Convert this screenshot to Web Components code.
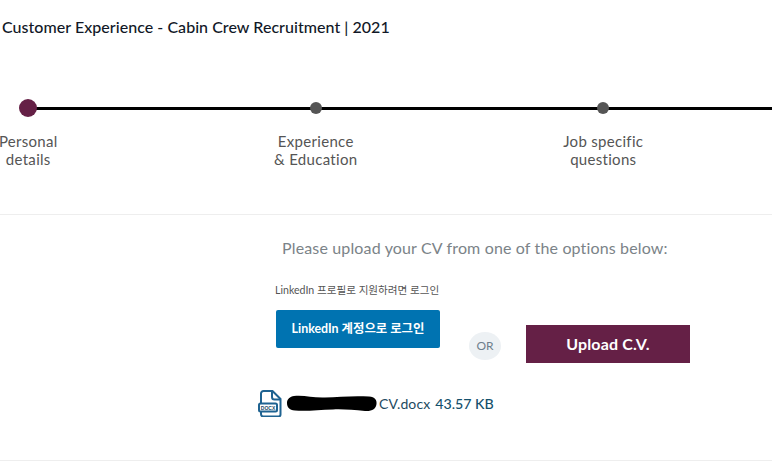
<!DOCTYPE html>
<html>
<head>
<meta charset="utf-8">
<style>
    html, body { margin: 0; background: #fff; overflow: hidden; }
    body { font-family: Lato, "Noto Sans CJK KR", sans-serif; height: 473px; width: 772px; }
</style>
</head>
<body>
<recruit-page></recruit-page>
<script>
const FONT = 'Lato, "Noto Sans CJK KR", sans-serif'

class FormStepper extends HTMLElement {
    constructor() {
        super()
        const shadow = this.attachShadow({ mode: 'open' })
        shadow.innerHTML = `
            <style>
                :host { display: block; position: relative; height: 119px; font-family: ${FONT}; }
                .line { position: absolute; left: 28px; right: 0; top: 12px; height: 3px; background: #000; }
                ol { list-style: none; margin: 0; padding: 0; display: grid; grid-template-columns: repeat(3, 287.5px); margin-left: -115.5px; position: relative; }
                li { display: flex; flex-direction: column; align-items: center; }
                i { display: block; width: 12px; height: 12px; border-radius: 50%; background: #555; margin: 7px 0 18px; }
                li.on i { width: 18px; height: 18px; background: #652046; margin: 4px 0 15px; }
                span { font-size: 15px; line-height: 18px; color: #555; text-align: center; letter-spacing: .3px; }
            </style>
            <div class="line"></div>
            <ol>
                <li class="on"><i></i><span>Personal<br>details</span></li>
                <li><i></i><span>Experience<br>&amp; Education</span></li>
                <li><i></i><span>Job specific<br>questions</span></li>
            </ol>`
    }
}

class OrBadge extends HTMLElement {
    constructor() {
        super()
        this.attachShadow({ mode: 'open' }).innerHTML = `
            <style>
                :host { display: flex; align-items: center; justify-content: center; width: 32px; height: 28px; border-radius: 50%; background: #edf1f4; color: #6f7f8c; font: 12px ${FONT}; padding-bottom: 1px; box-sizing: border-box; }
            </style>
            <slot></slot>`
    }
}

class FileChip extends HTMLElement {
    constructor() {
        super()
        this.attachShadow({ mode: 'open' }).innerHTML = `
            <style>
                :host { display: flex; align-items: center; font-family: ${FONT}; }
                svg { display: block; }
                .doc { margin-right: 5px; }
                .mask { margin-right: 2px; }
                .name { font-size: 14px; color: #1d4a5f; letter-spacing: .1px; }
                .size { font-size: 14.2px; font-weight: 500; color: #14506c; margin-left: 5px; }
            </style>
            <svg class="doc" width="24" height="27" viewBox="0 0 24 27" fill="none" stroke="#1f6391" stroke-width="2">
                <path d="M3 13V3.500A2.500 2.500 0 0 1 5.500 1h9l8 8v15.500a2 2 0 0 1-2 2H5.500A2.500 2.500 0 0 1 3 24v-2"/>
                <path d="M14 1.500V7a2.500 2.500 0 0 0 2.500 2.500H22"/>
                <rect x="1" y="13.500" width="18" height="8" rx="1.500" fill="#fff"/>
                <text x="10" y="19.500" font-size="5" font-weight="700" fill="#1a4a66" stroke="none" text-anchor="middle" font-family="Liberation Sans">DOCX</text>
            </svg>
            <svg class="mask" width="90" height="17" viewBox="0 0 90 17">
                <path d="M7 1C18 0 26 3 38 2.500C52 2 66 .5 82 1.500C88 2 90 5 89.500 9C89 14 85 16.500 78 16C66 15 56 14 46 14.500C32 15 18 16.500 8 15.500C2 15 0 12 0 8C0 4 3 1.500 7 1Z" fill="#000"/>
            </svg>
            <span class="name">CV.docx</span>
            <span class="size">43.57 KB</span>`
    }
}

class UploadPanel extends HTMLElement {
    constructor() {
        super()
        this.attachShadow({ mode: 'open' }).innerHTML = `
            <style>
                :host { display: block; font-family: ${FONT}; padding-top: 23px; height: 247px; box-sizing: border-box; border-bottom: 1px solid #eee; border-top: 1px solid #eee; }
                h2 { margin: 0 0 25px 282px; font-size: 16px; line-height: 20px; font-weight: 400; color: #7b8388; letter-spacing: .15px; white-space: nowrap; }
                .row { display: flex; margin-left: 275px; align-items: flex-start; }
                .li small { display: block; font-size: 10.600px; line-height: 14px; color: #555; margin-bottom: 13px; white-space: nowrap; }
                .li { width: 165px; }
                .li a { display: flex; align-items: center; justify-content: center; width: 164px; height: 38px; margin-left: 1px; background: #0073b1; color: #fff; font-size: 12.400px; font-weight: 700; border-radius: 2px; padding-bottom: 3px; box-sizing: border-box; white-space: nowrap; }
                or-badge { margin: 49px 0 0 29px; }
                .up { display: flex; align-items: center; justify-content: center; width: 164px; height: 38px; margin: 42px 0 0 25px; padding-bottom: 2px; box-sizing: border-box; background: #652046; color: #fff; font-size: 16px; font-weight: 700; letter-spacing: .15px; }
                file-chip { margin: 27px 0 0 258px; }
            </style>
            <h2>Please upload your CV from one of the options below:</h2>
            <div class="row">
                <div class="li">
                    <small>LinkedIn 프로필로 지원하려면 로그인</small>
                    <a>LinkedIn 계정으로 로그인</a>
                </div>
                <or-badge>OR</or-badge>
                <div class="up">Upload C.V.</div>
            </div>
            <file-chip></file-chip>`
    }
}

class RecruitPage extends HTMLElement {
    constructor() {
        super()
        this.attachShadow({ mode: 'open' }).innerHTML = `
            <style>
                :host { display: block; font-family: ${FONT}; }
                h1 { margin: 0; padding: 17px 0 0 2px; height: 95px; box-sizing: border-box; font-size: 16px; line-height: 20px; font-weight: 500; color: #111827; letter-spacing: .04px; white-space: nowrap; }
            </style>
            <h1>Customer Experience - Cabin Crew Recruitment | 2021</h1>
            <form-stepper></form-stepper>
            <upload-panel></upload-panel>`
    }
}

customElements.define('form-stepper', FormStepper)
customElements.define('or-badge', OrBadge)
customElements.define('file-chip', FileChip)
customElements.define('upload-panel', UploadPanel)
customElements.define('recruit-page', RecruitPage)
</script>
</body>
</html>
